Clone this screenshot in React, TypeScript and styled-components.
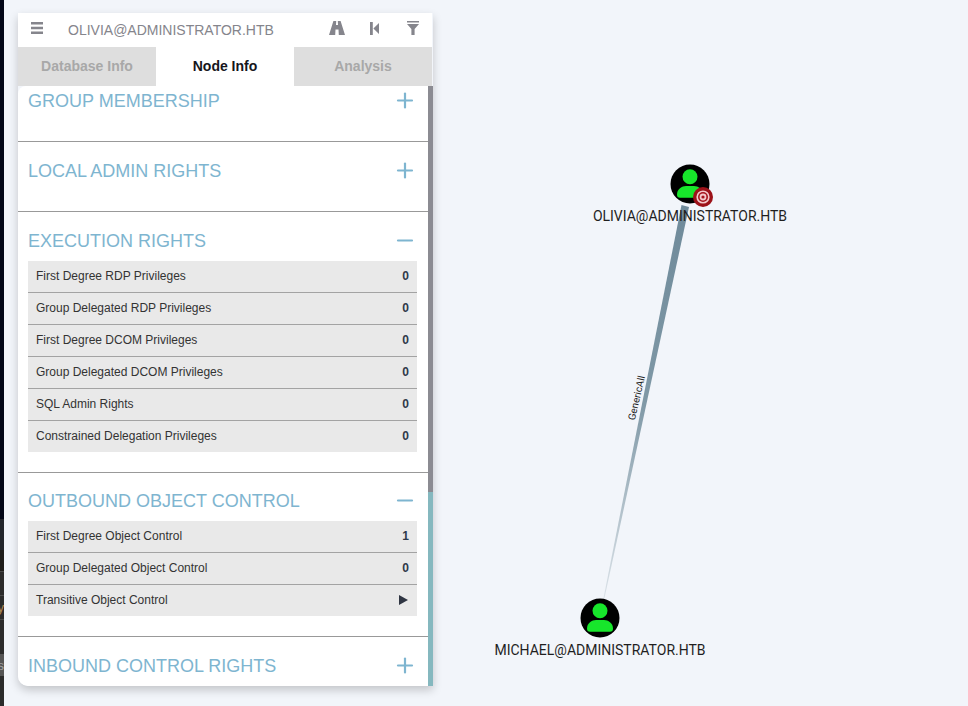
import React from "react";
import styled, { createGlobalStyle } from "styled-components";
import { Plus, Minus } from "lucide-react";

const Global = createGlobalStyle`
  html, body { margin: 0; padding: 0; width: 968px; height: 706px; overflow: hidden; background: #f2f5fa; }
  * { box-sizing: border-box; }
`;

const Page = styled.div`
  display: flex;
  width: 968px;
  height: 706px;
  background: #f2f5fa;
  font-family: "Liberation Sans", Arial, sans-serif;
  overflow: hidden;
`;

const EdgeStrip = styled.div`
  width: 4px;
  height: 706px;
  flex: none;
  display: flex;
  flex-direction: column;
`;

const EdgeBand = styled.div<{ $h: number; $c: string; $line?: boolean; $ink?: string }>`
  height: ${(p) => p.$h}px;
  flex: none;
  background: ${(p) => p.$c};
  border-bottom: ${(p) => (p.$line ? "1px solid #4a4a4a" : "none")};
  display: flex;
  justify-content: flex-end;
  align-items: center;
  overflow: hidden;
  font-size: 13px;
  color: ${(p) => p.$ink ?? "#999"};
`;

const Panel = styled.div`
  width: 415px;
  height: 673px;
  margin: 13px 0 0 14px;
  flex: none;
  display: flex;
  flex-direction: column;
  border-radius: 0 0 0 10px;
  box-shadow: 0 4px 10px rgba(0, 0, 0, 0.2);
`;

const Header = styled.div`
  height: 34px;
  width: 414px;
  background: #fff;
  display: flex;
  align-items: center;
  flex: none;
`;

const MenuButton = styled.div`
  width: 50px;
  height: 34px;
  display: flex;
  align-items: center;
  padding: 0 0 4px 13px;
`;

const NodeName = styled.div`
  flex: 1;
  font-size: 14px;
  color: #85858c;
  line-height: 34px;
`;

const HeaderIcon = styled.svg`
  display: block;
  fill: #85858c;
`;

const FilterIcon = styled(HeaderIcon)`
  margin-left: 3px;
`;

const HeaderIcons = styled.div`
  display: flex;
  align-items: center;
  padding: 0 13px 4px 0;
  gap: 25px;
`;

const Tabs = styled.div`
  display: flex;
  width: 414px;
  height: 39px;
  flex: none;
`;

const Tab = styled.div<{ $active?: boolean }>`
  width: 138px;
  height: 39px;
  padding-bottom: 2px;
  display: flex;
  align-items: center;
  justify-content: center;
  font-size: 14px;
  font-weight: 700;
  background: ${(p) => (p.$active ? "#fff" : "#dedede")};
  color: ${(p) => (p.$active ? "#16161c" : "#a8a8a8")};
`;

const Body = styled.div`
  position: relative;
  flex: 1;
  background: #fff;
  display: flex;
  flex-direction: column;
  border-radius: 8px 0 0 10px;
  overflow: hidden;
  padding-right: 5px;
`;

const ScrollTrack = styled.div`
  position: absolute;
  right: 0;
  top: 0;
  width: 5px;
  height: 600px;
  background: #85b8bf;
`;

const ScrollThumb = styled.div`
  height: 406px;
  background: #8b8b92;
`;

const Section = styled.div<{ $first?: boolean; $open?: boolean; $tight?: boolean }>`
  border-top: ${(p) => (p.$first ? "none" : "1px solid #999")};
  padding: ${(p) => (p.$first ? 0 : p.$tight ? 13 : 14)}px 11px ${(p) => (p.$open ? 20 : 25)}px 10px;
  flex: none;
`;

const SectionHead = styled.div`
  display: flex;
  align-items: center;
  justify-content: space-between;
  height: 30px;
`;

const SectionTitle = styled.div`
  font-size: 18px;
  color: #7eb5d0;
  line-height: 30px;
`;

const Toggle = styled.div`
  width: 24px;
  height: 24px;
  margin-top: -2px;
  color: #7eb5d0;
  display: flex;
  align-items: center;
  justify-content: center;
`;

const Rows = styled.div`
  margin-top: 5px;
`;

const Row = styled.div<{ $first?: boolean }>`
  display: flex;
  align-items: center;
  justify-content: space-between;
  height: ${(p) => (p.$first ? 31 : 32)}px;
  padding: 0 8px 2px;
  background: #e9e9e9;
  border-top: ${(p) => (p.$first ? "none" : "1px solid #a3a3a3")};
  font-size: 12px;
  color: #333;
`;

const RowValue = styled.span`
  font-weight: 700;
  color: #2f3a4a;
`;

const Arrow = styled.span`
  width: 0;
  height: 0;
  margin-right: 1px;
  border-left: 9px solid #2f3542;
  border-top: 5.5px solid transparent;
  border-bottom: 5.5px solid transparent;
`;

const Canvas = styled.div`
  position: relative;
  flex: 1;
  height: 706px;
`;

const EdgeDrawing = styled.svg`
  position: absolute;
  left: 0;
  top: 0;
  width: 535px;
  height: 706px;
`;

const NodeWrap = styled.div<{ $x: number; $y: number }>`
  position: absolute;
  left: ${(p) => p.$x}px;
  top: ${(p) => p.$y}px;
  width: 0;
  height: 0;
`;

const NodeIcon = styled.svg`
  position: absolute;
  left: -20px;
  top: -20px;
  width: 40px;
  height: 40px;
  display: block;
`;

const TargetBadge = styled.svg`
  position: absolute;
  left: 2px;
  top: 2px;
  width: 22px;
  height: 22px;
  display: block;
`;

const NodeLabel = styled.div`
  position: absolute;
  top: 24px;
  left: -150px;
  width: 300px;
  text-align: center;
  font-family: Roboto, "Liberation Sans", sans-serif;
  font-size: 14px;
  line-height: 16px;
  color: #1f1f1f;
  white-space: nowrap;
`;

const EdgeLabel = styled.div`
  position: absolute;
  left: 174px;
  top: 392px;
  width: 60px;
  text-align: center;
  font-family: Roboto, "Liberation Sans", sans-serif;
  font-size: 10px;
  line-height: 12px;
  color: #222;
  transform: rotate(-77deg);
  white-space: nowrap;
`;

type Sec = {
  title: string;
  open?: boolean;
  tight?: boolean;
  rows?: { label: string; value?: string; arrow?: boolean }[];
};

const sections: Sec[] = [
  { title: "GROUP MEMBERSHIP" },
  { title: "LOCAL ADMIN RIGHTS" },
  {
    title: "EXECUTION RIGHTS",
    open: true,
    rows: [
      { label: "First Degree RDP Privileges", value: "0" },
      { label: "Group Delegated RDP Privileges", value: "0" },
      { label: "First Degree DCOM Privileges", value: "0" },
      { label: "Group Delegated DCOM Privileges", value: "0" },
      { label: "SQL Admin Rights", value: "0" },
      { label: "Constrained Delegation Privileges", value: "0" },
    ],
  },
  {
    title: "OUTBOUND OBJECT CONTROL",
    open: true,
    tight: true,
    rows: [
      { label: "First Degree Object Control", value: "1" },
      { label: "Group Delegated Object Control", value: "0" },
      { label: "Transitive Object Control", arrow: true },
    ],
  },
  { title: "INBOUND CONTROL RIGHTS" },
];

const Person = () => (
  <>
    <circle cx="20" cy="20" r="19.5" fill="#000" />
    <circle cx="20" cy="12.8" r="7.5" fill="#17e62b" />
    <path
      d="M7 30.5 C7 25 12 22 16 22 H24 C28 22 33 25 33 30.5 Q33 33.7 30 33.7 H10 Q7 33.7 7 30.5 Z"
      fill="#17e62b"
    />
  </>
);

export default function App() {
  return (
    <Page>
      <Global />
      <EdgeStrip>
        <EdgeBand $h={519} $c="#020617" />
        <EdgeBand $h={31} $c="#23262d" />
        <EdgeBand $h={22} $c="#1e1c1a" $line />
        <EdgeBand $h={24} $c="#2c2c2c" $line />
        <EdgeBand $h={24} $c="#2c2c2c" $line $ink="#b08a55">
          y
        </EdgeBand>
        <EdgeBand $h={34} $c="#2c2c2c" />
        <EdgeBand $h={22} $c="#555" $ink="#a0a0a0">
          s
        </EdgeBand>
        <EdgeBand $h={30} $c="#2b2b2b" />
      </EdgeStrip>
      <Panel>
        <Header>
          <MenuButton>
            <HeaderIcon width="12" height="12" viewBox="0 0 12 12">
              <path d="M0 0 H12 V2.6 H0 Z M0 4.7 H12 V7.3 H0 Z M0 9.4 H12 V12 H0 Z" />
            </HeaderIcon>
          </MenuButton>
          <NodeName>OLIVIA@ADMINISTRATOR.HTB</NodeName>
          <HeaderIcons>
            <HeaderIcon width="16" height="14" viewBox="0 0 16 14">
              <path d="M4.4 0 H7.2 L7 4 H9 L8.8 0 H11.6 L16 14 H9.8 L9.5 8.6 H6.5 L6.2 14 H0 Z" />
            </HeaderIcon>
            <HeaderIcon width="9" height="13" viewBox="0 0 9 13">
              <path d="M0 0 H2.8 V13 H0 Z M9 1 V12 L3.4 6.5 Z" />
            </HeaderIcon>
            <FilterIcon width="12" height="14" viewBox="0 0 12 14">
              <path d="M0 0 H12 V1.6 H0 Z M0 3 H12 L7.6 8 V14 H4.4 V8 Z" />
            </FilterIcon>
          </HeaderIcons>
        </Header>
        <Tabs>
          <Tab>Database Info</Tab>
          <Tab $active>Node Info</Tab>
          <Tab>Analysis</Tab>
        </Tabs>
        <Body>
          <ScrollTrack>
            <ScrollThumb />
          </ScrollTrack>
          {sections.map((s, i) => (
            <Section key={s.title} $first={i === 0} $open={s.open} $tight={s.tight}>
              <SectionHead>
                <SectionTitle>{s.title}</SectionTitle>
                <Toggle>{s.open ? <Minus size={25} strokeWidth={2.2} /> : <Plus size={25} strokeWidth={2.2} />}</Toggle>
              </SectionHead>
              {s.rows && (
                <Rows>
                  {s.rows.map((r, j) => (
                    <Row key={r.label} $first={j === 0}>
                      <span>{r.label}</span>
                      {r.arrow ? <Arrow /> : <RowValue>{r.value}</RowValue>}
                    </Row>
                  ))}
                </Rows>
              )}
            </Section>
          ))}
        </Body>
      </Panel>
      <Canvas>
        <EdgeDrawing viewBox="433 0 535 706">
          <defs>
            <linearGradient id="edge" x1="0" y1="0" x2="0" y2="1">
              <stop offset="0" stopColor="#6f8a9a" />
              <stop offset="0.5" stopColor="#7f98a6" />
              <stop offset="1" stopColor="#dbe2e8" />
            </linearGradient>
          </defs>
          <polygon points="681.5,205 689,207 604.5,598 603.5,598" fill="url(#edge)" />
        </EdgeDrawing>
        <EdgeLabel>GenericAll</EdgeLabel>
        <NodeWrap $x={257} $y={184}>
          <NodeIcon viewBox="0 0 40 40">
            <Person />
          </NodeIcon>
          <TargetBadge viewBox="0 0 22 22">
            <circle cx="11" cy="11" r="10" fill="#9c1219" />
            <circle cx="11" cy="11" r="6.6" fill="#f3c9cb" />
            <circle cx="11" cy="11" r="5" fill="#a5141d" />
            <circle cx="11" cy="11" r="3.4" fill="#f3c9cb" />
            <circle cx="11" cy="11" r="1.6" fill="#a5141d" />
          </TargetBadge>
          <NodeLabel>OLIVIA@ADMINISTRATOR.HTB</NodeLabel>
        </NodeWrap>
        <NodeWrap $x={167} $y={618}>
          <NodeIcon viewBox="0 0 40 40">
            <Person />
          </NodeIcon>
          <NodeLabel>MICHAEL@ADMINISTRATOR.HTB</NodeLabel>
        </NodeWrap>
      </Canvas>
    </Page>
  );
}
